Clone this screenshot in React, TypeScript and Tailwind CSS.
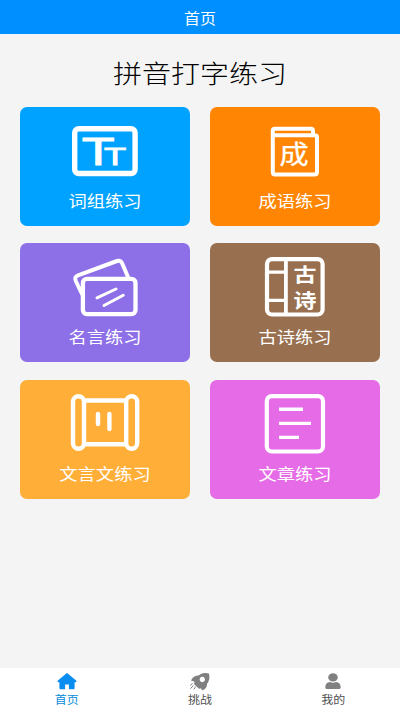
import type { ReactNode } from "react";

interface Practice {
  label: string;
  color: string;
  icon: ReactNode;
}

const practices: Practice[] = [
  {
    label: "词组练习",
    color: "bg-[#00a2ff]",
    icon: (
      <>
        <rect x="5.7" y="9.7" width="60.4" height="44.8" rx="4" strokeWidth="5.4" />
        <g fill="currentColor" strokeWidth="0.8" strokeLinejoin="miter" className="font-['Liberation_Sans',sans-serif]">
          <text x="12.8" y="46.3" fontSize="39.5" textLength="33" lengthAdjust="spacingAndGlyphs">T</text>
          <text x="35" y="46.3" fontSize="24.5" textLength="22.2" lengthAdjust="spacingAndGlyphs">T</text>
        </g>
      </>
    ),
  },
  {
    label: "成语练习",
    color: "bg-[#ff8503]",
    icon: (
      <>
        <path d="M54 16V12Q54 9.8 51.8 9.8H16Q13.8 9.8 13.8 12V53Q13.8 55.5 16.3 55.5H55.5Q58 55.5 58 53V18.5Q58 16.3 55.5 16.3H14" strokeWidth="4" />
        <g transform="translate(35 45) scale(1 0.9)">
          <text fontSize="29.5" textAnchor="middle" fill="currentColor" strokeWidth="0.3">成</text>
        </g>
      </>
    ),
  },
  {
    label: "名言练习",
    color: "bg-[#8d6fe8]",
    icon: (
      <>
        <path d="M13 39L6.8 26Q5 22 9 20.3L48 6Q51.5 4.8 53 8L59 22" strokeWidth="4" />
        <rect x="13.9" y="23.9" width="52.6" height="35.2" rx="4" strokeWidth="4.3" />
        <path d="M28 42.8L47 34M35 50.5L54.2 40.3" strokeWidth="3" />
      </>
    ),
  },
  {
    label: "古诗练习",
    color: "bg-[#987050]",
    icon: (
      <>
        <rect x="8" y="4.1" width="55.6" height="55.4" rx="5" strokeWidth="4.2" />
        <path d="M26.9 4V60" strokeWidth="3.8" strokeLinecap="butt" />
        <path d="M8 17.2H26M8 45.3H26" strokeWidth="3.2" />
        <g fill="currentColor" stroke="none" textAnchor="middle" fontSize="23" className="font-bold">
          <text transform="translate(46 27.3) scale(1 0.85)">古</text>
          <text transform="translate(46 52.7) scale(1 0.85)">诗</text>
        </g>
      </>
    ),
  },
  {
    label: "文言文练习",
    color: "bg-[#ffae38]",
    icon: (
      <>
        <rect x="4" y="4.2" width="11" height="52.6" rx="5.5" strokeWidth="4.4" />
        <rect x="57.2" y="4.2" width="11" height="52.6" rx="5.5" strokeWidth="4.4" />
        <path d="M15 8.5H57M15 52.3H57" strokeWidth="4.4" />
        <path d="M29 22V32M40.4 22V37" strokeWidth="4.4" />
      </>
    ),
  },
  {
    label: "文章练习",
    color: "bg-[#e66be6]",
    icon: (
      <>
        <rect x="7.8" y="4.1" width="56.2" height="55.4" rx="5" strokeWidth="4.2" />
        <path d="M20 17.3H44M20 31.4H52M20 45.4H40" strokeWidth="3.4" strokeLinecap="butt" />
      </>
    ),
  },
];

const PracticeCard = ({ label, color, icon }: Practice) => (
  <button className={`flex flex-col items-center rounded-[7px] pt-3 text-white ${color}`}>
    <svg
      width="72"
      height="66"
      viewBox="0 0 72 66"
      fill="none"
      stroke="currentColor"
      strokeLinecap="round"
      strokeLinejoin="round"
    >
      {icon}
    </svg>
    <span className="mt-[3px] scale-y-[0.9] whitespace-nowrap text-[18.3px] leading-6">{label}</span>
  </button>
);

const HomeIcon = () => (
  <svg width="22" height="20" viewBox="0 0 22 20" fill="currentColor">
    <path d="M10.3 1.4Q11 .8 11.7 1.4L20.4 8.8Q21 10.2 19.6 10.2H18.6V16.2Q18.6 17.2 17.6 17.2H12.9V12.4H9.1V17.2H4.4Q3.4 17.2 3.4 16.2V10.2H2.4Q1 10.2 1.6 8.8Z" />
  </svg>
);

const RocketIcon = () => (
  <svg width="22" height="20" viewBox="0 0 22 20" fill="currentColor">
    <path
      fillRule="evenodd"
      d="M20 1.6Q15.3 0 11 2.4L9.4 3.6Q4.4 3.6 2 8.6L5.6 9.8L5 12L10 16.8L12 16.2L13.2 18.6Q18.4 16 18 12Q21.4 8 20 1.6ZM13.3 4.8a2.7 2.7 0 1 0 .01 0Z"
    />
    <path d="M3.6 11.5L1.2 13.4M4.4 13.4L1.6 16.6M6.6 14.6L4.8 17.4" fill="none" stroke="currentColor" strokeWidth="1" />
  </svg>
);

const UserIcon = () => (
  <svg width="22" height="20" viewBox="0 0 22 20" fill="currentColor">
    <ellipse cx="11" cy="5.4" rx="4.8" ry="4.2" />
    <path d="M3.3 15.4Q3.3 10 8 9.9Q11 11.4 14 9.9Q18.7 10 18.7 15.4Q18.7 17 17 17H5Q3.3 17 3.3 15.4Z" />
  </svg>
);

const tabs = [
  { label: "首页", icon: <HomeIcon />, color: "text-[#078cf0]", labelColor: "text-[#078cd8]" },
  { label: "挑战", icon: <RocketIcon />, color: "text-[#808080]", labelColor: "text-[#505050]" },
  { label: "我的", icon: <UserIcon />, color: "text-[#808080]", labelColor: "text-[#505050]" },
];

export default function App() {
  return (
    <div className="flex h-[711px] w-[400px] flex-col overflow-hidden bg-[#f4f4f4] font-['Noto_Sans_CJK_SC',sans-serif]">
      <header className="flex h-[34px] shrink-0 items-center justify-center bg-[#008fff] pt-px text-white">
        <span className="scale-y-[0.9] text-base leading-6">首页</span>
      </header>

      <main className="flex-1">
        <h1 className="flex h-[72.5px] items-center justify-center pt-[3px] text-[29px] font-light text-black">
          <span className="scale-y-[0.88] leading-9">拼音打字练习</span>
        </h1>
        <div className="grid auto-rows-[119px] grid-cols-2 gap-x-5 gap-y-[17.7px] px-5">
          {practices.map((item) => (
            <PracticeCard key={item.label} {...item} />
          ))}
        </div>
      </main>

      <nav className="grid h-[43px] shrink-0 grid-cols-3 bg-white">
        {tabs.map((tab) => (
          <button key={tab.label} className={`flex flex-col items-center pt-1 ${tab.color}`}>
            {tab.icon}
            <span className={`-mt-px scale-y-[0.95] text-xs leading-4 ${tab.labelColor}`}>{tab.label}</span>
          </button>
        ))}
      </nav>
    </div>
  );
}
